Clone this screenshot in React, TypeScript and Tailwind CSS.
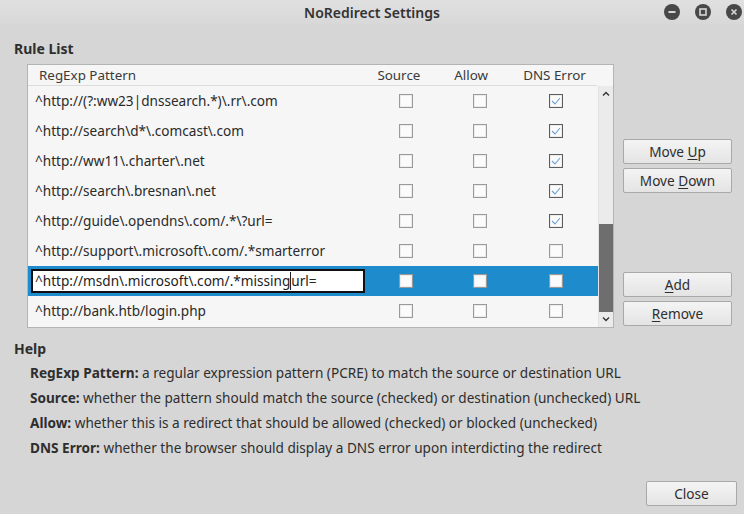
import { useState } from "react";

type Rule = { pattern: string; source: boolean; allow: boolean; dns: boolean };

const rules: Rule[] = [
  { pattern: "^http://(?:ww23|dnssearch.*)\\.rr\\.com", source: false, allow: false, dns: true },
  { pattern: "^http://search\\d*\\.comcast\\.com", source: false, allow: false, dns: true },
  { pattern: "^http://ww11\\.charter\\.net", source: false, allow: false, dns: true },
  { pattern: "^http://search\\.bresnan\\.net", source: false, allow: false, dns: true },
  { pattern: "^http://guide\\.opendns\\.com/.*\\?url=", source: false, allow: false, dns: true },
  { pattern: "^http://support\\.microsoft\\.com/.*smarterror", source: false, allow: false, dns: false },
  { pattern: "^http://msdn\\.microsoft\\.com/.*missingurl=", source: false, allow: false, dns: false },
  { pattern: "^http://bank.htb/login.php", source: false, allow: false, dns: false },
];

const Check = ({ checked }: { checked: boolean }) => (
  <div
    className={`w-[14px] h-[14px] border bg-[#fbfbfb] shadow-[inset_0_0_0_1px_#ececec] flex items-center justify-center ${
      checked ? "border-[#5c5c5c]" : "border-[#9a9a9a]"
    }`}
  >
    {checked && (
      <svg width="10" height="8" viewBox="0 0 10 8">
        <path d="M1 4 L4 7 L9 1" fill="none" stroke="#6a9fd4" strokeWidth="1.1" />
      </svg>
    )}
  </div>
);

const Btn = ({
  children,
  className = "",
  wide = true,
}: {
  children: React.ReactNode;
  className?: string;
  wide?: boolean;
}) => (
  <button
    className={`h-[25px] ${wide ? "w-[109px]" : "w-[91px]"} rounded-[2px] border border-[#a9a9a9] bg-gradient-to-b from-[#f4f4f4] to-[#e4e4e4] text-[13.6px] text-[#2e2e2e] leading-none ${className}`}
  >
    {children}
  </button>
);

const WinBtn = ({ kind }: { kind: "min" | "max" | "close" }) => (
  <div className="w-[16px] h-[16px] rounded-full bg-[#484848] flex items-center justify-center">
    <svg width="10" height="10" viewBox="0 0 10 10">
      {kind === "min" && <rect x="1.5" y="4" width="7" height="2" fill="#d8d8d8" />}
      {kind === "max" && (
        <rect x="2" y="2" width="6" height="6" fill="none" stroke="#d8d8d8" strokeWidth="1.6" />
      )}
      {kind === "close" && (
        <path d="M2.5 2.5 L7.5 7.5 M7.5 2.5 L2.5 7.5" stroke="#d8d8d8" strokeWidth="1.6" />
      )}
    </svg>
  </div>
);

export default function App() {
  const [selected] = useState(6);

  return (
    <div
      className="w-[744px] h-[514px] bg-[#d6d6d6] flex flex-col text-[#2e2e2e] overflow-hidden"
      style={{ fontFamily: '"Noto Sans", "DejaVu Sans", sans-serif' }}
    >
      {/* title bar */}
      <div className="h-[24px] bg-gradient-to-b from-[#e0e0e0] to-[#d8d8d8] flex items-center">
        <div className="w-[90px]" />
        <div className="flex-1 text-center text-[14px] font-semibold text-[#333]">NoRedirect Settings</div>
        <div className="flex items-center gap-[15px] pr-[2px] w-[90px] justify-end">
          <WinBtn kind="min" />
          <WinBtn kind="max" />
          <WinBtn kind="close" />
        </div>
      </div>

      <div className="pl-[14px] mt-[16px] h-[18px] leading-[18px] text-[14px] font-bold">Rule List</div>

      <div className="flex mt-[6px]">
        {/* table */}
        <div className="ml-[27px] w-[587px] h-[264px] border border-[#b4b4b4] bg-[#f6f6f6] flex flex-col">
          <div className="h-[21px] border-b border-[#dcdcdc] flex items-center text-[13.4px] text-[#3a3a3a] mr-[16px]">
            <div className="w-[338px] pl-[11px]">RegExp Pattern</div>
            <div className="w-[78px] pl-[12px]">Source</div>
            <div className="w-[74px] pl-[11px]">Allow</div>
            <div className="w-[80px] pl-[6px]">DNS Error</div>
          </div>
          <div className="flex flex-1">
            <div className="flex-1 flex flex-col">
              {rules.map((r, i) => (
                <div
                  key={i}
                  className={`h-[30px] flex items-center text-[13.6px] ${
                    i === selected ? "bg-[#1e8bcd]" : "text-[#2a2a2a]"
                  }`}
                >
                  <div className="w-[338px] flex items-center">
                    {i === selected ? (
                      <div className="ml-[3px] w-[334px] h-[24px] border-2 border-[#111] bg-white flex items-center pl-[2px] text-[#222]">
                        <span>^http://msdn\.microsoft\.com/.*missing</span>
                        <span className="w-px h-[18px] bg-[#222]" />
                        <span>url=</span>
                      </div>
                    ) : (
                      <span className="pl-[7px]">{r.pattern}</span>
                    )}
                  </div>
                  <div className="w-[78px] pl-[33px]">
                    <Check checked={r.source} />
                  </div>
                  <div className="w-[74px] pl-[29px]">
                    <Check checked={r.allow} />
                  </div>
                  <div className="w-[80px] pl-[31px]">
                    <Check checked={r.dns} />
                  </div>
                </div>
              ))}
            </div>
            {/* scrollbar */}
            <div className="w-[15px] bg-[#ebebeb] flex flex-col border-l border-[#e2e2e2]">
              <div className="h-[14px] flex items-center justify-center">
                <svg width="8" height="5" viewBox="0 0 8 5">
                  <path d="M1 4.5 L4 1.5 L7 4.5" fill="none" stroke="#333" strokeWidth="1.4" />
                </svg>
              </div>
              <div className="h-[124px]" />
              <div className="h-[88px] bg-[#6e6e6e]" />
              <div className="flex-1 flex items-center justify-center">
                <svg width="8" height="5" viewBox="0 0 8 5">
                  <path d="M1 0.5 L4 3.5 L7 0.5" fill="none" stroke="#333" strokeWidth="1.4" />
                </svg>
              </div>
            </div>
          </div>
        </div>

        {/* right buttons */}
        <div className="ml-[9px] flex flex-col">
          <Btn className="mt-[75px]">
            Move <span className="underline underline-offset-2">U</span>p
          </Btn>
          <Btn className="mt-[4px]">
            Move <span className="underline underline-offset-2">D</span>own
          </Btn>
          <Btn className="mt-[79px]">
            <span className="underline underline-offset-2">A</span>dd
          </Btn>
          <Btn className="mt-[4px]">
            <span className="underline underline-offset-2">R</span>emove
          </Btn>
        </div>
      </div>

      <div className="pl-[14px] mt-[12px] h-[18px] leading-[18px] text-[14px] font-bold">Help</div>
      <div className="pl-[30px] mt-[2px] text-[13.6px] leading-[25px] text-[#2e2e2e]">
        <div>
          <b>RegExp Pattern:</b> a regular expression pattern (PCRE) to match the source or destination URL
        </div>
        <div>
          <b>Source:</b> whether the pattern should match the source (checked) or destination (unchecked) URL
        </div>
        <div>
          <b>Allow:</b> whether this is a redirect that should be allowed (checked) or blocked (unchecked)
        </div>
        <div>
          <b>DNS Error:</b> whether the browser should display a DNS error upon interdicting the redirect
        </div>
      </div>

      <div className="flex justify-end pr-[7px] mt-[21px]">
        <Btn wide={false}>Close</Btn>
      </div>
    </div>
  );
}
